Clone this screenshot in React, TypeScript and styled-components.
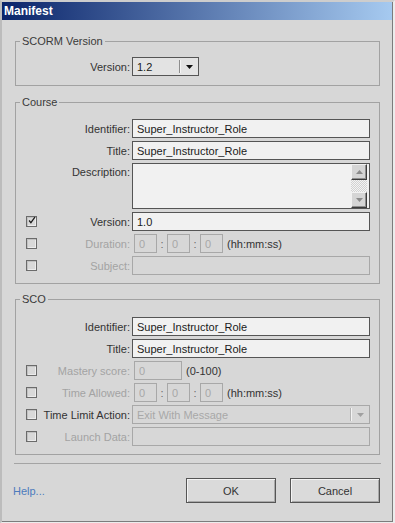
import React from 'react';
import styled, { createGlobalStyle } from 'styled-components';

const GlobalStyle = createGlobalStyle`
  html, body { margin: 0; padding: 0; background: #d7d7d7; }
  body { font-family: "Liberation Sans", Arial, sans-serif; font-size: 11px; color: #333; }
`;

const Window = styled.div`
  width: 395px;
  height: 523px;
  box-sizing: border-box;
  display: flex;
  border-top: 2px solid #cdcdcd;
  border-left: 2px solid #bcbcbc;
  border-right: 2px solid #ececec;
  border-bottom: 1px solid #ececec;
`;

const Frame = styled.div`
  flex: 1;
  display: flex;
  flex-direction: column;
  background: #d7d7d7;
  border-right: 1px solid #7c7c7c;
  border-bottom: 1px solid #7c7c7c;
`;

const TitleBar = styled.div`
  height: 18px;
  line-height: 18px;
  padding-left: 2px;
  background: linear-gradient(to right, #0a246a, #a6caf0);
  color: #fff;
  font-weight: bold;
  font-size: 12px;
`;

const Body = styled.div`
  display: flex;
  flex-direction: column;
  padding: 0 12px 0 13px;
`;

const Group = styled.fieldset<{ $top: number }>`
  margin: ${p => p.$top}px 0 0;
  padding: 0;
  min-width: 0;
  border: 1px solid #a2a2a2;
`;

const Legend = styled.legend`
  margin-left: 4px;
  padding: 0 2px;
  line-height: 13px;
  color: #3a3a3a;
`;

const Rows = styled.div<{ $pt: number; $pb: number }>`
  display: flex;
  flex-direction: column;
  gap: 3px;
  padding: ${p => p.$pt}px 9px ${p => p.$pb}px 10px;
`;

const Row = styled.div<{ $top?: boolean }>`
  display: grid;
  grid-template-columns: 11px 91px 238px;
  column-gap: 2px;
  align-items: ${p => (p.$top ? 'start' : 'center')};
  min-height: 19px;
`;

const Label = styled.span<{ $disabled?: boolean; $pt?: number }>`
  text-align: right;
  white-space: nowrap;
  padding-top: ${p => p.$pt ?? 0}px;
  color: ${p => (p.$disabled ? '#a3a3a3' : '#333')};
`;

const Box = styled.span`
  width: 11px;
  height: 11px;
  box-sizing: border-box;
  display: flex;
  align-items: center;
  justify-content: center;
  border: 1px solid #6b6b6b;
  background: #d9d9d9;
  box-shadow: inset 1px 1px #c2c2c2, inset -1px -1px #ececec;
  overflow: visible;
`;

const Field = styled.input<{ $w?: number }>`
  box-sizing: border-box;
  width: ${p => (p.$w ? `${p.$w}px` : '100%')};
  height: 19px;
  margin: 0;
  padding: 0 4px;
  border: 1px solid #555;
  border-radius: 0;
  background: #f1f1f1;
  color: #1a1a1a;
  font: inherit;
  line-height: 17px;
  outline: none;
  &:disabled {
    border-color: #a8a8a8;
    background: transparent;
    color: #a8a8a8;
    -webkit-text-fill-color: #a8a8a8;
  }
`;

const Inline = styled.div`
  display: flex;
  align-items: center;
  padding-left: 2px;
`;

const Colon = styled.span`
  width: 10px;
  text-align: center;
  color: #6a6a6a;
`;

const Hint = styled.span`
  margin-left: 4px;
  color: #333;
`;

const TextBox = styled.div`
  height: 46px;
  box-sizing: border-box;
  display: flex;
  border: 1px solid #555;
  background: #f1f1f1;
`;

const TextArea = styled.div`
  flex: 1;
`;

const ScrollBar = styled.div`
  width: 16px;
  margin-right: 2px;
  display: flex;
  flex-direction: column;
`;

const ScrollBtn = styled.div`
  height: 16px;
  box-sizing: border-box;
  display: flex;
  align-items: center;
  justify-content: center;
  background: #d5d5d5;
  border-top: 1px solid #f2f2f2;
  border-left: 1px solid #f2f2f2;
  border-right: 1px solid #3c3c3c;
  border-bottom: 1px solid #3c3c3c;
  box-shadow: inset -1px -1px #8e8e8e;
`;

const Track = styled.div`
  flex: 1;
  background: repeating-conic-gradient(#f4f4f4 0 25%, #d2d2d2 0 50%) 0 0 / 2px 2px;
`;

const SelectBox = styled.div<{ $w?: number; $disabled?: boolean }>`
  box-sizing: border-box;
  width: ${p => (p.$w ? `${p.$w}px` : '100%')};
  height: 19px;
  display: flex;
  align-items: center;
  border: 1px solid ${p => (p.$disabled ? '#a8a8a8' : '#555')};
  background: ${p => (p.$disabled ? 'transparent' : '#e3e3e3')};
  color: ${p => (p.$disabled ? '#a8a8a8' : '#1a1a1a')};
`;

const SelectValue = styled.span`
  flex: 1;
  padding-left: 4px;
  white-space: nowrap;
  overflow: hidden;
`;

const SelectDivider = styled.span<{ $disabled?: boolean }>`
  width: 1px;
  height: 13px;
  background: ${p => (p.$disabled ? '#b4b4b4' : '#8e8e8e')};
  box-shadow: 1px 0 #f4f4f4;
`;

const SelectArrow = styled.span`
  width: 18px;
  display: flex;
  justify-content: center;
`;

const Separator = styled.div`
  margin: 8px -1px 0 -1px;
  border-top: 1px solid #a4a4a4;
`;

const Footer = styled.div`
  display: flex;
  align-items: center;
  gap: 14px;
  margin-top: 14px;
`;

const Help = styled.a`
  flex: 1;
  margin-left: -2px;
  color: #4d7bbd;
  text-decoration: none;
  cursor: pointer;
`;

const Button = styled.button`
  width: 90px;
  height: 25px;
  margin: 0;
  padding: 0;
  border: 1px solid #555;
  border-radius: 0;
  background: #dadada;
  box-shadow: inset 1px 1px #f4f4f4, inset -1px -1px #a9a9a9;
  color: #333;
  font: inherit;
`;

const Triangle = ({ color, up }: { color: string; up?: boolean }) => (
  <svg width="7" height="4" viewBox="0 0 7 4">
    <polygon points={up ? '0,4 7,4 3.5,0' : '0,0 7,0 3.5,4'} fill={color} />
  </svg>
);

const Check = ({ checked }: { checked?: boolean }) => (
  <Box>
    {checked && (
      <svg width="11" height="11" viewBox="0 0 11 11" style={{ marginTop: -2, marginLeft: 1 }}>
        <polyline points="1.5,5.5 4,8.5 9.5,1" fill="none" stroke="#1a1a1a" strokeWidth="1.7" />
      </svg>
    )}
  </Box>
);

const Select = ({ value, width, disabled }: { value: string; width?: number; disabled?: boolean }) => (
  <SelectBox $w={width} $disabled={disabled}>
    <SelectValue>{value}</SelectValue>
    <SelectDivider $disabled={disabled} />
    <SelectArrow>
      <Triangle color={disabled ? '#a0a0a0' : '#111'} />
    </SelectArrow>
  </SelectBox>
);

const TimeFields = ({ disabled }: { disabled?: boolean }) => (
  <Inline>
    <Field $w={23} defaultValue="0" disabled={disabled} />
    <Colon>:</Colon>
    <Field $w={23} defaultValue="0" disabled={disabled} />
    <Colon>:</Colon>
    <Field $w={23} defaultValue="0" disabled={disabled} />
    <Hint>(hh:mm:ss)</Hint>
  </Inline>
);

const Empty = styled.span``;

export default function App() {
  return (
    <>
      <GlobalStyle />
      <Window>
        <Frame>
          <TitleBar>Manifest</TitleBar>
          <Body>
            <Group $top={15}>
              <Legend>SCORM Version</Legend>
              <Rows $pt={9} $pb={9}>
                <Row>
                  <Empty />
                  <Label>Version:</Label>
                  <Select value="1.2" width={67} />
                </Row>
              </Rows>
            </Group>

            <Group $top={10}>
              <Legend>Course</Legend>
              <Rows $pt={10} $pb={8}>
                <Row>
                  <Empty />
                  <Label>Identifier:</Label>
                  <Field defaultValue="Super_Instructor_Role" />
                </Row>
                <Row>
                  <Empty />
                  <Label>Title:</Label>
                  <Field defaultValue="Super_Instructor_Role" />
                </Row>
                <Row $top>
                  <Empty />
                  <Label $pt={3}>Description:</Label>
                  <TextBox>
                    <TextArea />
                    <ScrollBar>
                      <ScrollBtn>
                        <Triangle color="#8a8a8a" up />
                      </ScrollBtn>
                      <Track />
                      <ScrollBtn>
                        <Triangle color="#8a8a8a" />
                      </ScrollBtn>
                    </ScrollBar>
                  </TextBox>
                </Row>
                <Row>
                  <Check checked />
                  <Label>Version:</Label>
                  <Field defaultValue="1.0" />
                </Row>
                <Row>
                  <Check />
                  <Label $disabled>Duration:</Label>
                  <TimeFields disabled />
                </Row>
                <Row>
                  <Check />
                  <Label $disabled>Subject:</Label>
                  <Field disabled />
                </Row>
              </Rows>
            </Group>

            <Group $top={9}>
              <Legend>SCO</Legend>
              <Rows $pt={11} $pb={8}>
                <Row>
                  <Empty />
                  <Label>Identifier:</Label>
                  <Field defaultValue="Super_Instructor_Role" />
                </Row>
                <Row>
                  <Empty />
                  <Label>Title:</Label>
                  <Field defaultValue="Super_Instructor_Role" />
                </Row>
                <Row>
                  <Check />
                  <Label $disabled>Mastery score:</Label>
                  <Inline>
                    <Field $w={48} defaultValue="0" disabled />
                    <Hint>(0-100)</Hint>
                  </Inline>
                </Row>
                <Row>
                  <Check />
                  <Label $disabled>Time Allowed:</Label>
                  <TimeFields disabled />
                </Row>
                <Row>
                  <Check />
                  <Label>Time Limit Action:</Label>
                  <Select value="Exit With Message" disabled />
                </Row>
                <Row>
                  <Check />
                  <Label $disabled>Launch Data:</Label>
                  <Field disabled />
                </Row>
              </Rows>
            </Group>

            <Separator />
            <Footer>
              <Help>Help...</Help>
              <Button>OK</Button>
              <Button>Cancel</Button>
            </Footer>
          </Body>
        </Frame>
      </Window>
    </>
  );
}
